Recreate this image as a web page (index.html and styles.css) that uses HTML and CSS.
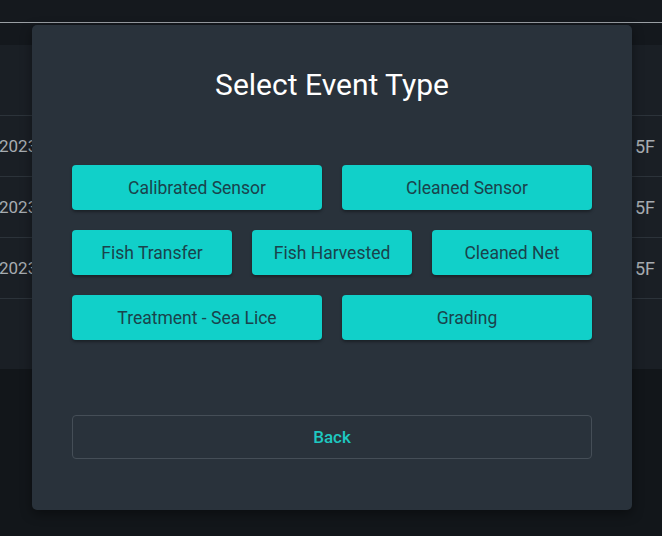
FILE: index.html
```html
<!DOCTYPE html>
<html>
<head>
    <title>Events</title>
<link rel="stylesheet" href="styles.css">
</head>
<body>
    <div class="topbar"></div>
    <div class="toolbar"></div>

    <div class="table">
        <div class="table-head"></div>
        <div class="table-row"><span class="cell-date">2023</span><span class="cell-pen">5F</span></div>
        <div class="table-row"><span class="cell-date">2023</span><span class="cell-pen">5F</span></div>
        <div class="table-row"><span class="cell-date">2023</span><span class="cell-pen">5F</span></div>
        <div class="table-foot"></div>
    </div>

    <div class="modal">
        <h2 class="modal-title">Select Event Type</h2>
        <div class="event-grid">
            <button type="button" class="event-btn wide">Calibrated Sensor</button>
            <button type="button" class="event-btn wide">Cleaned Sensor</button>
            <button type="button" class="event-btn">Fish Transfer</button>
            <button type="button" class="event-btn">Fish Harvested</button>
            <button type="button" class="event-btn">Cleaned Net</button>
            <button type="button" class="event-btn wide">Treatment - Sea Lice</button>
            <button type="button" class="event-btn wide">Grading</button>
        </div>
        <button type="button" class="back-btn">Back</button>
    </div>
</body>
</html>
```

FILE: styles.css
```css
body {
  font-family: Roboto, "Liberation Sans", sans-serif;
  background-color: #12161a;
  margin: 0;
  padding: 0;
  overflow: hidden;
}

.topbar {
  height: 22px;
  background-color: #15191e;
  border-bottom: 1px solid #9a9fa4;
}

.toolbar {
  height: 22px;
  background-color: #14181d;
}

.table {
  background-color: #1a1f25;
}

.table-head {
  height: 70px;
  border-bottom: 1px solid #2c333a;
}

.table-row {
  height: 60px;
  border-bottom: 1px solid #2c333a;
  display: flex;
  align-items: center;
  justify-content: space-between;
  color: #a7acb1;
  font-size: 17px;
}

.cell-date {
  margin-left: -1px;
}

.cell-pen {
  margin-right: 7px;
  font-size: 18px;
}

.table-foot {
  height: 70px;
}

/* dialog floats over the table */
.modal {
  position: absolute;
  left: 32px;
  top: 25px;
  width: 600px;
  box-sizing: border-box;
  padding: 40px 40px 51px;
  background-color: #29323b;
  border-radius: 5px;
  box-shadow: 0 4px 12px rgba(0, 0, 0, 0.4);
}

.modal-title {
  margin: 0;
  height: 40px;
  line-height: 40px;
  text-align: center;
  color: #ffffff;
  font-size: 30px;
  font-weight: 400;
}

.event-grid {
  display: grid;
  grid-template-columns: repeat(6, 1fr);
  gap: 20px;
  margin-top: 60px;
}

.event-btn {
  grid-column: span 2;
  height: 45px;
  border: none;
  border-radius: 4px;
  background-color: #11d0c9;
  color: #1a434c;
  font-family: inherit;
  font-size: 17.5px;
  font-weight: 400;
  box-shadow: 0 2px 3px rgba(0, 0, 0, 0.35);
  cursor: pointer;
}

.event-btn.wide {
  grid-column: span 3;
}

.back-btn {
  display: block;
  width: 100%;
  height: 44px;
  margin-top: 75px;
  background: transparent;
  border: 1px solid #454e57;
  border-radius: 4px;
  color: #1ec8c1;
  font-family: inherit;
  font-size: 17px;
  font-weight: 500;
  cursor: pointer;
}
```
